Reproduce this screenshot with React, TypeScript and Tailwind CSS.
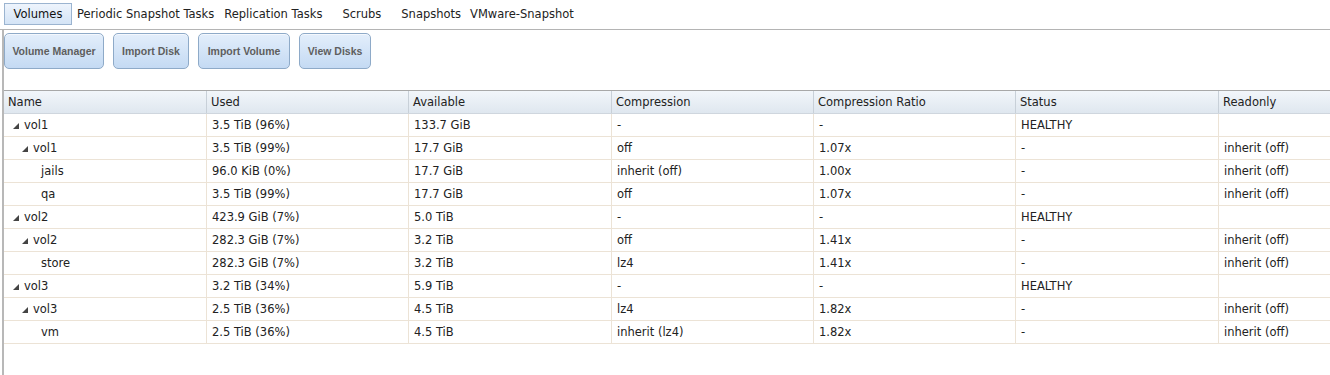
import React from "react";

type Row = { name: string; level: number; cells: string[] };

const rows: Row[] = [
  { name: "vol1", level: 0, cells: ["3.5 TiB (96%)", "133.7 GiB", "-", "-", "HEALTHY", ""] },
  { name: "vol1", level: 1, cells: ["3.5 TiB (99%)", "17.7 GiB", "off", "1.07x", "-", "inherit (off)"] },
  { name: "jails", level: 2, cells: ["96.0 KiB (0%)", "17.7 GiB", "inherit (off)", "1.00x", "-", "inherit (off)"] },
  { name: "qa", level: 2, cells: ["3.5 TiB (99%)", "17.7 GiB", "off", "1.07x", "-", "inherit (off)"] },
  { name: "vol2", level: 0, cells: ["423.9 GiB (7%)", "5.0 TiB", "-", "-", "HEALTHY", ""] },
  { name: "vol2", level: 1, cells: ["282.3 GiB (7%)", "3.2 TiB", "off", "1.41x", "-", "inherit (off)"] },
  { name: "store", level: 2, cells: ["282.3 GiB (7%)", "3.2 TiB", "lz4", "1.41x", "-", "inherit (off)"] },
  { name: "vol3", level: 0, cells: ["3.2 TiB (34%)", "5.9 TiB", "-", "-", "HEALTHY", ""] },
  { name: "vol3", level: 1, cells: ["2.5 TiB (36%)", "4.5 TiB", "lz4", "1.82x", "-", "inherit (off)"] },
  { name: "vm", level: 2, cells: ["2.5 TiB (36%)", "4.5 TiB", "inherit (lz4)", "1.82x", "-", "inherit (off)"] },
];

const headers = ["Name", "Used", "Available", "Compression", "Compression Ratio", "Status", "Readonly"];
const widths = ["w-[202px]", "w-[202px]", "w-[203px]", "w-[202px]", "w-[202px]", "w-[203px]", "flex-1"];

function Tri() {
  return (
    <svg width="6" height="6" viewBox="0 0 6 6" className="shrink-0">
      <polygon points="6,0 6,6 0,6" fill="#444" />
    </svg>
  );
}

function Btn({ label, w }: { label: string; w: string }) {
  return (
    <div
      className={`${w} h-[36px] flex items-center justify-center pt-[1px] rounded-[5px] border border-[#8eaac8] bg-gradient-to-b from-[#e3eefb] to-[#c4daf3] text-[10.5px] font-bold text-[#5e5e5e] shadow-[inset_0_1px_0_#f4f8fd]`}
      style={{ fontFamily: '"Liberation Sans", Arial, sans-serif' }}
    >
      {label}
    </div>
  );
}

export default function App() {
  const font = { fontFamily: '"DejaVu Sans", Verdana, sans-serif' };
  return (
    <div className="w-[1330px] h-[375px] bg-white text-[11.5px] text-[#222] overflow-hidden" style={font}>
      {/* Tabs */}
      <div className="h-[30px] flex items-start pt-[3px] pl-[4px] border-b border-[#b4b4b4]">
        <div className="h-[22px] w-[68px] pt-[2px] flex items-center justify-center border border-[#9bb4d0] bg-gradient-to-b from-[#eef4fc] to-[#d4e4f6] text-[#111]">Volumes</div>
        <div className="h-[22px] pt-[2px] flex items-center ml-[5px]">Periodic Snapshot Tasks</div>
        <div className="h-[22px] pt-[2px] flex items-center ml-[10px]">Replication Tasks</div>
        <div className="h-[22px] pt-[2px] flex items-center ml-[20px]">Scrubs</div>
        <div className="h-[22px] pt-[2px] flex items-center ml-[20px]">Snapshots</div>
        <div className="h-[22px] pt-[2px] flex items-center ml-[9px]">VMware-Snapshot</div>
      </div>
      <div className="flex">
        <div className="w-[2px] ml-[2px] bg-[#b8b8b8] h-[345px] shrink-0" />
        <div className="flex-1 min-w-0">
          {/* Buttons */}
          <div className="flex gap-[9px] pt-[3px] h-[60px]">
            <Btn label="Volume Manager" w="w-[100px]" />
            <Btn label="Import Disk" w="w-[76px]" />
            <Btn label="Import Volume" w="w-[92px]" />
            <Btn label="View Disks" w="w-[72px]" />
          </div>
          {/* Table */}
          <div className="border-t border-[#a8a8a8]">
            <div className="flex h-[23px] bg-gradient-to-b from-[#f2f6fa] to-[#dfe7ef] border-b border-[#cfd6de]">
              {headers.map((h, i) => (
                <div key={i} className={`${widths[i]} shrink-0 flex items-center pt-[2px] pl-[4px] ${i > 0 ? "border-l border-[#c8d0d8]" : ""}`}>
                  {h}
                </div>
              ))}
            </div>
            {rows.map((r, ri) => (
              <div key={ri} className="flex h-[23px] border-b border-[#ece3d6]">
                <div className={`${widths[0]} shrink-0 flex items-center pt-[2px]`}>
                  {r.level === 0 && (
                    <div className="flex items-center pl-[9px] gap-[5px]"><Tri /><span>{r.name}</span></div>
                  )}
                  {r.level === 1 && (
                    <div className="flex items-center pl-[18px] gap-[5px]"><Tri /><span>{r.name}</span></div>
                  )}
                  {r.level === 2 && <div className="pl-[37px]">{r.name}</div>}
                </div>
                {r.cells.map((c, ci) => (
                  <div key={ci} className={`${widths[ci + 1]} shrink-0 flex items-center pt-[2px] pl-[5px] border-l border-[#ece3d6]`}>
                    {c}
                  </div>
                ))}
              </div>
            ))}
          </div>
        </div>
      </div>
    </div>
  );
}
